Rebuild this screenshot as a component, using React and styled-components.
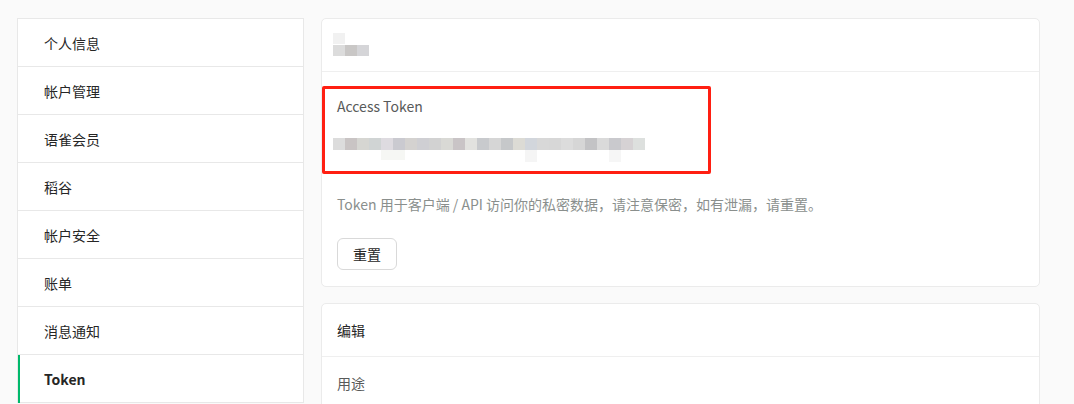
import styled, { createGlobalStyle } from 'styled-components'

const GlobalStyle = createGlobalStyle`
  html, body {
    margin: 0;
    padding: 0;
    background: #fafafa;
  }
  body {
    font-family: "Noto Sans CJK SC", "Noto Sans", sans-serif;
    font-size: 14px;
    color: #262626;
  }
`

const menu = ['个人信息', '帐户管理', '语雀会员', '稻谷', '帐户安全', '账单', '消息通知', 'Token']

const headerBlocks = [
  { x: 0, y: 0, c: '#f1f1f1' },
  { x: 0, y: 12, c: '#dcdcdc' },
  { x: 12, y: 12, c: '#c9c7c6' },
  { x: 24, y: 12, c: '#d5d5d8' },
]

const tokenColors = [
  '#dcdcdc', '#c9c4c4', '#d6d6d2', '#d0d4d4', '#dedbe0', '#cacad0', '#d4d2d0',
  '#cfcfd3', '#d2d2d2', '#d9d9d5', '#c9c4c6', '#e2e2df', '#c8cacd', '#d6d6d6',
  '#c6c8ca', '#dcdbd5', '#d2d6dc', '#d8d8d8', '#d7d7d7', '#dcdcdc', '#d6d6d6',
  '#c3c3c5', '#dadada', '#c9c9cd', '#d6d2d4', '#dde0de',
]

const Page = styled.div`
  display: flex;
  gap: 17px;
  padding: 18px 17px;
  align-items: flex-start;
`

const Sidebar = styled.nav`
  width: 287px;
  flex-shrink: 0;
  background: #fff;
  border: 1px solid #e8e8e8;
  border-bottom: none;
  box-sizing: border-box;
`

const MenuItem = styled.div`
  position: relative;
  height: 48px;
  box-sizing: border-box;
  border-bottom: 1px solid #e8e8e8;
  display: flex;
  align-items: center;
  padding-left: 26px;
  font-size: 14px;
  color: #262626;
  font-weight: ${(p) => (p.$active ? 600 : 400)};

  &::before {
    content: '';
    display: ${(p) => (p.$active ? 'block' : 'none')};
    position: absolute;
    left: 0;
    top: 0;
    bottom: -1px;
    width: 2px;
    background: #00b96b;
  }
`

const Main = styled.main`
  width: 719px;
  flex-shrink: 0;
  display: flex;
  flex-direction: column;
  gap: 16px;
`

const Card = styled.section`
  position: relative;
  background: #fff;
  border: 1px solid #ebebeb;
  border-radius: 5px;
`

const CardHeader = styled.div`
  height: 52px;
  border-bottom: 1px solid #efefef;
  display: flex;
  align-items: center;
  padding: 0 15px;
  color: #262626;
`

const CardBody = styled.div`
  padding: 23px 15px 16px;
`

const Label = styled.div`
  color: #585a5a;
  line-height: 22px;
`

const Mosaic = styled.svg`
  display: block;
  margin-left: ${(p) => p.$shift || 0}px;
`

const Hint = styled.p`
  margin: 31px 0 0;
  color: #8a8f8d;
  line-height: 22px;
`

const Button = styled.button`
  margin-top: 23px;
  width: 60px;
  height: 32px;
  background: #fff;
  border: 1px solid #d9d9d9;
  border-radius: 6px;
  font-family: inherit;
  font-size: 14px;
  color: #262626;
  cursor: pointer;
`

const Highlight = styled.div`
  position: absolute;
  left: 0;
  top: 67px;
  width: 389px;
  height: 88px;
  box-sizing: border-box;
  border: 3px solid #ff1f12;
  border-radius: 2px;
  pointer-events: none;
`

const Row = styled.div`
  height: 52px;
  display: flex;
  align-items: center;
  padding: 0 15px;
  color: #585a5a;
`

export default function App() {
  return (
    <>
      <GlobalStyle />
      <Page>
        <Sidebar>
          {menu.map((m) => (
            <MenuItem key={m} $active={m === 'Token'}>
              {m}
            </MenuItem>
          ))}
        </Sidebar>
        <Main>
          <Card>
            <CardHeader>
              <Mosaic width="36" height="24" $shift={-4}>
                {headerBlocks.map((b, i) => (
                  <rect key={i} x={b.x} y={b.y} width="12" height="11" fill={b.c} />
                ))}
              </Mosaic>
            </CardHeader>
            <CardBody>
              <Label>Access Token</Label>
              <Mosaic width="312" height="24" $shift={-4} style={{ marginTop: 21 }}>
                {tokenColors.map((c, i) => (
                  <rect key={i} x={i * 12} y="0" width="12" height="12" fill={c} />
                ))}
                <rect x="48" y="12" width="24" height="10" fill="#f6f7f4" />
                <rect x="192" y="12" width="12" height="12" fill="#f5f5f5" />
                <rect x="276" y="12" width="12" height="12" fill="#f6f6f6" />
              </Mosaic>
              <Hint>Token 用于客户端 / API 访问你的私密数据，请注意保密，如有泄漏，请重置。</Hint>
              <Button>重置</Button>
            </CardBody>
            <Highlight />
          </Card>
          <Card>
            <CardHeader>编辑</CardHeader>
            <Row>用途</Row>
          </Card>
        </Main>
      </Page>
    </>
  )
}
